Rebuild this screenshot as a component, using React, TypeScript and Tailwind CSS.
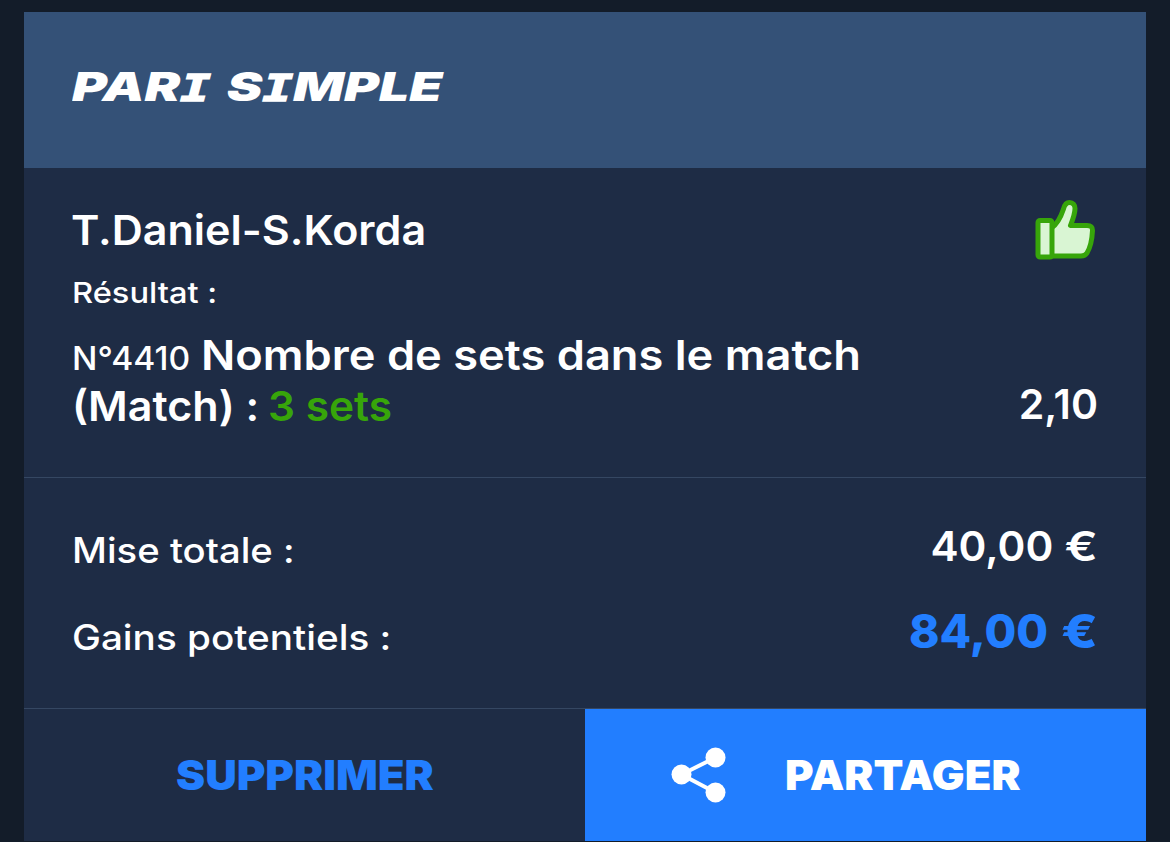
function ThumbUp() {
  return (
    <svg className="mr-[3px] overflow-visible" width="64" height="64" viewBox="0 0 64 64" fill="#d9f5d3" stroke="#37a50a" strokeWidth="5" strokeLinejoin="round">
      <path d="M20.500 29C25 26 29.500 19 32.500 10C33.500 6 35 3.500 38.500 3.500C42 3.500 44 6 44 9.500C44 15 42 20 39.500 26.500H56C60 26.500 61.500 28 61.500 31.500C61 42 59 49 56 54C54.500 56.500 53 57 50 57H20.500Z" />
      <rect x="7" y="21.500" width="14" height="36.500" rx="2" />
    </svg>
  );
}

function ShareIcon() {
  return (
    <svg width="56" height="56" viewBox="0 0 56 56" fill="white">
      <path d="M44.500 10.500L10.500 27.500L44.500 45.500" fill="none" stroke="white" strokeWidth="4" />
      <circle cx="44.500" cy="10.500" r="10" />
      <circle cx="10.500" cy="27.500" r="10" />
      <circle cx="44.500" cy="45.500" r="10" />
    </svg>
  );
}

function SlabI() {
  return <span className="font-['DejaVu_Sans_Mono',monospace] text-[38px] [-webkit-text-stroke:1.5px_white]">I</span>;
}

export default function App() {
  return (
    <main className="flex h-[842px] w-[1170px] flex-col bg-[#131c29] px-6 pt-3 pb-px font-['Inter',sans-serif] font-semibold whitespace-nowrap text-white">
      <header className="flex h-[156px] items-center bg-[#345177] px-12 pb-1.5">
        <h1 className="inline-block origin-left scale-x-[1.335] text-[40px] leading-[50px] font-black italic [word-spacing:4px]">
          PAR<SlabI /> S<SlabI />MPLE
        </h1>
      </header>

      <section className="flex h-[310px] justify-between border-b border-[#354762] bg-[#1e2c45] px-12">
        <div className="flex flex-col items-start pt-[37px]">
          <h2 className="-ml-px origin-left scale-x-[1.05] text-[41px] leading-[50px]">T.Daniel-S.Korda</h2>
          <p className="mt-[18px] origin-left scale-x-[1.125] text-[29px] leading-[40px] font-medium">Résultat :</p>
          <p className="mt-[17px] flex h-[51px] items-baseline leading-[51px]">
            <span className="w-[114px] origin-left scale-x-[1.05] text-[32px] font-medium">N°4410</span>
            <span className="ml-[15px] origin-left scale-x-[1.103] text-[41px]">Nombre de sets dans le match</span>
          </p>
          <p className="flex h-[51px] text-[41px] leading-[51px]">
            <span className="origin-left scale-x-[1.05]">(Match) :</span>
            <span className="ml-[18px] origin-left scale-x-[1.035] text-[#37a50a]">3 sets</span>
          </p>
        </div>
        <div className="flex flex-col items-end pt-[31px]">
          <ThumbUp />
          <span className="mt-[116px] origin-right text-[41px] leading-[50px]">2,10</span>
        </div>
      </section>

      <section className="flex h-[231px] flex-col border-b border-[#354762] bg-[#1e2c45] px-12 pt-[43px]">
        <div className="flex h-[50px] items-start justify-between leading-[50px]">
          <span className="mt-1 origin-left scale-x-[1.094] text-[35px] font-medium">Mise totale :</span>
          <span className="flex text-[41px]">
            <span className="origin-right scale-x-[1.03]">40,00</span>
            <span className="ml-[17px] origin-right scale-x-[1.2]">€</span>
          </span>
        </div>
        <div className="mt-[35px] flex h-[50px] items-start justify-between leading-[50px]">
          <span className="mt-1.5 origin-left scale-x-[1.105] text-[35px] font-medium">Gains potentiels :</span>
          <span className="flex text-[46px] font-extrabold text-[#227eff]">
            <span className="origin-right">84,00</span>
            <span className="ml-[18px] origin-right scale-x-[1.16]">€</span>
          </span>
        </div>
      </section>

      <footer className="grid h-[132px] grid-cols-2 text-[41px] font-black">
        <button className="flex items-center justify-center bg-[#1e2c45] pt-0.5 text-[#227eff]">
          <span className="scale-x-[1.066]">SUPPRIMER</span>
        </button>
        <button className="flex items-center bg-[#227eff] pl-[86px]">
          <ShareIcon />
          <span className="ml-[58px] origin-left scale-x-[1.063] pt-0.5">PARTAGER</span>
        </button>
      </footer>
    </main>
  );
}
